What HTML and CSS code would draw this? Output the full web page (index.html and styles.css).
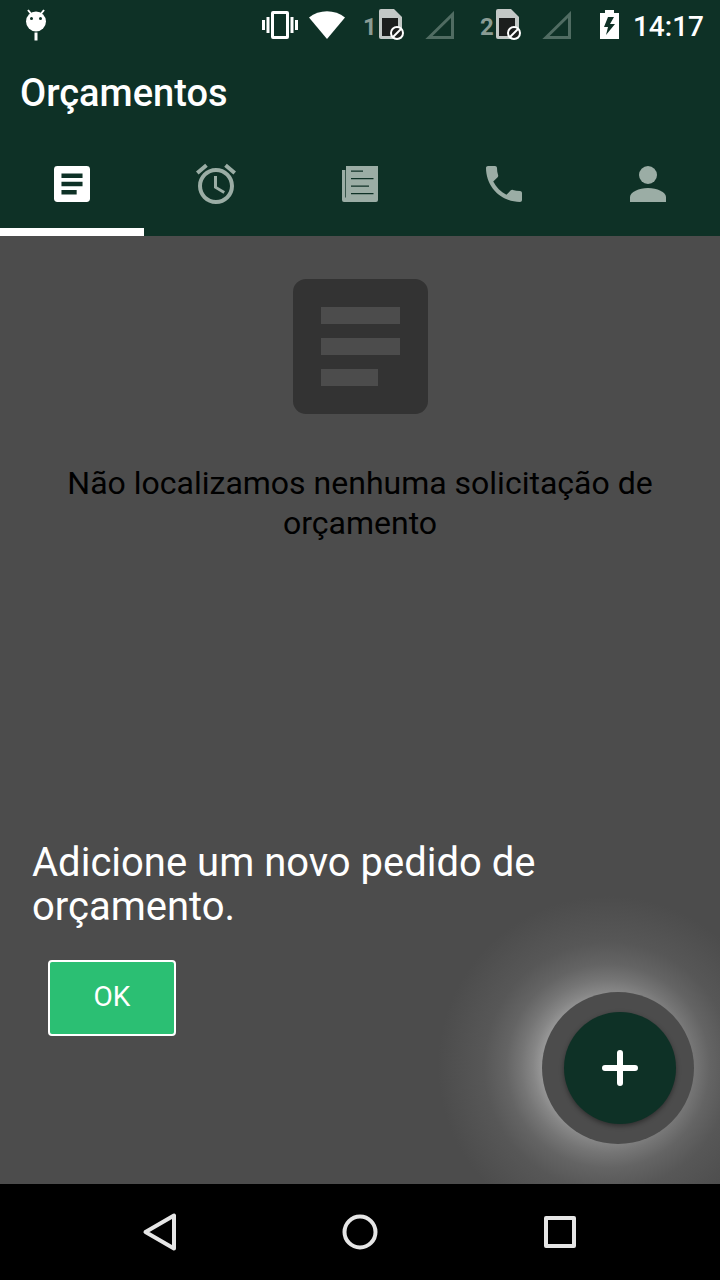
FILE: index.html
```html
<!DOCTYPE html>
<html lang="pt-BR">
<head>
<meta charset="utf-8">
<meta name="viewport" content="width=device-width, initial-scale=1">
<title>Orçamentos</title>
<link rel="stylesheet" href="styles.css">
</head>
<body>
<svg class="defs" aria-hidden="true">
  <symbol id="article" viewBox="0 0 135 135"><path fill-rule="evenodd" d="M13 0h109a13 13 0 0 1 13 13v109a13 13 0 0 1-13 13H13a13 13 0 0 1-13-13V13A13 13 0 0 1 13 0zM28 28v17h79V28zM28 59v17h79V59zM28 90v17h57V90z"/></symbol>
  <symbol id="sim" viewBox="0 0 26 32">
    <path fill="#c3c8c6" d="M2 0h13l8 8v20a2 2 0 0 1-2 2H2a2 2 0 0 1-2-2V2a2 2 0 0 1 2-2z"/>
    <path fill="#1c1e1d" d="M3 9h16v18H3z"/>
    <circle cx="18" cy="24" r="6" fill="#1c1e1d" stroke="#fff" stroke-width="2"/>
    <path stroke="#fff" stroke-width="2" d="M14 28l8-8"/>
  </symbol>
  <symbol id="signal" viewBox="0 0 29 28"><path fill="none" stroke="#506c62" stroke-width="3" d="M4 26.500L27.500 3.500v23z"/></symbol>
</svg>
<header class="header">
  <div class="status">
    <svg class="droid" viewBox="0 0 22 32" aria-hidden="true">
      <path stroke="#fff" stroke-width="2" d="M3 1l4 5M19 1l-4 5"/>
      <circle cx="11" cy="12.500" r="10" fill="#fff"/>
      <circle cx="6.500" cy="9.500" r="1.500" fill="#0e3126"/><circle cx="15.500" cy="9.500" r="1.500" fill="#0e3126"/>
      <path fill="#fff" d="M9.500 23.500h3v8h-3z"/>
    </svg>
    <svg class="vibrate" viewBox="0 0 36 28" fill="#fff" aria-hidden="true">
      <path fill-rule="evenodd" d="M11 0h14a2 2 0 0 1 2 2v24a2 2 0 0 1-2 2H11a2 2 0 0 1-2-2V2a2 2 0 0 1 2-2zM12 3v22h12V3z"/>
      <path d="M0 9h3v10H0zM4.500 6h3v16h-3zM28.500 6h3v16h-3zM33 9h3v10h-3z"/>
    </svg>
    <svg class="wifi" viewBox="0 0 36 28" aria-hidden="true"><path fill="#fff" d="M0 6.500C10-2 26-2 36 6.500L18 28z"/></svg>
    <span class="slot">1</span>
    <svg class="sim" aria-hidden="true"><use href="#sim"/></svg>
    <svg class="signal" aria-hidden="true"><use href="#signal"/></svg>
    <span class="slot">2</span>
    <svg class="sim" aria-hidden="true"><use href="#sim"/></svg>
    <svg class="signal" aria-hidden="true"><use href="#signal"/></svg>
    <svg class="battery" viewBox="0 0 19 30" aria-hidden="true">
      <path fill="#fff" fill-rule="evenodd" d="M5 0h9v3h5v26H0V3h5zM8 7L4 17h4l-2 8 9-11h-5l4-7z"/>
    </svg>
    <time class="clock">14:17</time>
  </div>
  <h1 class="title">Orçamentos</h1>
  <nav class="tabs">
    <button class="tab active" aria-label="Orçamentos"><svg class="icon36"><use href="#article"/></svg></button>
    <button class="tab" aria-label="Agenda"><svg class="icon48" viewBox="0 0 24 24"><path d="M22 5.720l-4.600-3.860-1.290 1.530 4.600 3.860L22 5.720zM7.880 3.390L6.600 1.860 2 5.710l1.290 1.530 4.590-3.850zM12.500 8H11v6l4.750 2.850.75-1.230-4-2.370V8zM12 4c-4.970 0-9 4.030-9 9s4.020 9 9 9a9 9 0 1 0 0-18zm0 16c-3.870 0-7-3.130-7-7s3.130-7 7-7 7 3.130 7 7-3.130 7-7 7z"/></svg></button>
    <button class="tab" aria-label="Notícias"><svg class="icon36" viewBox="0 0 36 36"><path fill-rule="evenodd" d="M5 0h31v34a2 2 0 0 1-2 2H2a2 2 0 0 1-2-2V4h3.300v27.500H4V0zM9 4.500v1.300h12V4.500zM9 12v1.300h22.500V12zM9 19.500v1.300h18v-1.300zM9 27v1.300h22.500V27z"/></svg></button>
    <button class="tab" aria-label="Telefone"><svg class="icon48" viewBox="0 0 24 24"><path d="M6.620 10.790c1.440 2.830 3.760 5.140 6.590 6.590l2.200-2.200c.27-.27.670-.36 1.020-.24 1.120.37 2.330.57 3.570.57.550 0 1 .45 1 1V20c0 .55-.45 1-1 1-9.390 0-17-7.610-17-17 0-.55.450-1 1-1h3.500c.55 0 1 .45 1 1 0 1.250.2 2.450.57 3.570.11.35.03.740-.25 1.020l-2.200 2.200z"/></svg></button>
    <button class="tab" aria-label="Perfil"><svg class="icon36" viewBox="0 0 36 36"><circle cx="18" cy="9" r="9"/><path d="M0 36v-5c0-5 9-9 18-9s18 4 18 9v5z"/></svg></button>
  </nav>
</header>
<main class="content">
  <section class="empty">
    <svg class="empty-icon" aria-hidden="true"><use href="#article"/></svg>
    <p class="empty-text">Não localizamos nenhuma solicitação de orçamento</p>
  </section>
  <section class="hint">
    <p class="hint-text">Adicione um novo pedido de orçamento.</p>
    <button class="ok">OK</button>
  </section>
  <div class="spot">
    <button class="fab" aria-label="Adicionar"><svg class="icon36" viewBox="0 0 36 36"><path stroke="#fff" stroke-width="6" stroke-linecap="round" d="M18 3v30M3 18h30"/></svg></button>
  </div>
</main>
<nav class="navbar">
  <button class="key" aria-label="Voltar"><svg class="icon40" viewBox="0 0 40 40"><path d="M5.500 20L34 3.500v33z"/></svg></button>
  <button class="key" aria-label="Início"><svg class="icon40" viewBox="0 0 40 40"><circle cx="20" cy="20" r="15.500"/></svg></button>
  <button class="key" aria-label="Recentes"><svg class="icon40" viewBox="0 0 40 40"><path d="M6 6h28v28H6z"/></svg></button>
</nav>
</body>
</html>
```
FILE: styles.css
```css
* { box-sizing: border-box; }
body {
  margin: 0;
  min-height: 100vh;
  display: flex;
  flex-direction: column;
  font-family: Roboto, sans-serif;
  background: #4c4c4c;
}
button {
  margin: 0;
  padding: 0;
  border: 0;
  background: none;
  font: inherit;
  display: flex;
  align-items: center;
  justify-content: center;
}
svg { display: block; flex: none; }
.defs { position: absolute; width: 0; height: 0; }
.icon36 { width: 36px; height: 36px; }
.icon40 { width: 40px; height: 40px; }
.icon48 { width: 48px; height: 48px; }

.header { background: #0e3126; color: #fff; }
.status {
  height: 48px;
  display: flex;
  align-items: center;
  padding: 2px 16px 0 25px;
}
.droid { width: 22px; height: 32px; margin-right: auto; }
.vibrate { width: 36px; height: 28px; }
.wifi { width: 36px; height: 28px; margin-left: 11px; }
.slot {
  width: 16px;
  padding-top: 4px;
  margin-left: 18px;
  font-size: 24px;
  line-height: 28px;
  font-weight: 700;
  color: #8a9c95;
}
.sim { width: 26px; height: 32px; }
.signal { width: 29px; height: 28px; margin-left: 20px; }
.signal + .slot { margin-left: 26px; }
.battery { width: 19px; height: 30px; margin-left: 29px; }
.clock {
  padding-top: 3px;
  margin-left: 14px;
  font-size: 28px;
  line-height: 32px;
  font-weight: 500;
}
.title {
  margin: 0;
  padding: 21px 20px 15px;
  font-size: 38px;
  line-height: 48px;
  font-weight: 500;
}
.tabs { display: flex; height: 104px; }
.tab {
  flex: 1;
  border-top: 8px solid transparent;
  border-bottom: 8px solid transparent;
  fill: #9bada5;
}
.tab.active { fill: #fff; border-bottom-color: #fff; }

.content {
  flex: 1;
  position: relative;
  z-index: 0;
  display: flex;
  flex-direction: column;
  background: #4c4c4c;
  overflow: hidden;
}
.empty {
  display: flex;
  flex-direction: column;
  align-items: center;
  gap: 49px;
  padding: 43px 32px 0;
}
.empty-icon { width: 135px; height: 135px; fill: #333; }
.empty-text {
  margin: 0;
  color: #000;
  font-size: 32px;
  line-height: 40px;
  text-align: center;
}
.hint { margin-top: auto; padding: 0 32px 148px; color: #fff; }
.hint-text {
  margin: 0 0 31px;
  max-width: 580px;
  font-size: 40px;
  line-height: 44px;
}
.ok {
  width: 128px;
  height: 76px;
  margin-left: 16px;
  padding-bottom: 4px;
  border: 2px solid #fff;
  border-radius: 4px;
  background: #2bbf73;
  color: #fff;
  font-size: 28px;
}
.spot {
  position: absolute;
  right: 26px;
  bottom: 40px;
  width: 152px;
  height: 152px;
  border-radius: 50%;
  background: #4c4c4c;
  display: flex;
  align-items: center;
  justify-content: center;
  padding-left: 4px;
}
.spot::before {
  content: "";
  position: absolute;
  z-index: -1;
  left: -104px;
  top: -96px;
  width: 340px;
  height: 340px;
  background: radial-gradient(circle closest-side, #9a9a9a 38%, #868686 44%, #757575 51%, #646464 60%, #575757 73%, #4c4c4c 100%);
}
.fab {
  width: 112px;
  height: 112px;
  border-radius: 50%;
  background: #0e3126;
  box-shadow: 0 2px 5px rgba(0, 0, 0, 0.4);
}

.navbar {
  height: 96px;
  display: flex;
  justify-content: center;
  align-items: center;
  gap: 160px;
  background: #000;
}
.key { fill: none; stroke: #e6e6e6; stroke-width: 4; stroke-linejoin: round; }
```
